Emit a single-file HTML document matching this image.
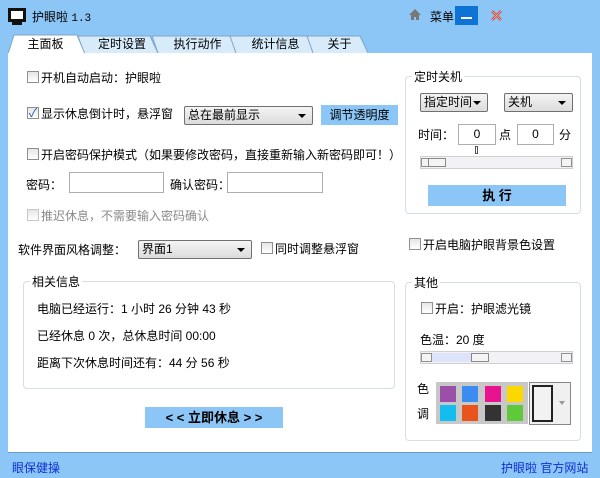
<!DOCTYPE html>
<html><head><meta charset="utf-8"><style>
*{margin:0;padding:0;box-sizing:border-box}
body{width:600px;height:478px;background:#8cc6f6;font:12px "Liberation Sans","Noto Sans CJK SC",sans-serif;color:#000;position:relative;overflow:hidden}
.a{position:absolute;white-space:nowrap}
.cb{position:absolute;width:12px;height:12px;border:1px solid #8f8f8f;background:linear-gradient(#e6e6e6,#fff)}
.in{position:absolute;height:21px;border:1px solid #abadb3;background:#fff;text-align:center;line-height:19px}
.sel{position:absolute;height:19px;border:1px solid #707070;border-radius:2px;background:linear-gradient(#f4f4f4,#dcdcdc);padding-left:3px;line-height:17px}
.sel:after{content:"";position:absolute;right:6px;top:7px;border:4px solid transparent;border-top:4px solid #000}
.btn{position:absolute;background:#8cc6f6;text-align:center}
.grp{position:absolute;border:1px solid #d5dfe5;border-radius:4px}
.gl{position:absolute;background:#fff;padding:0 2px;top:-9px;left:6px}
.tab{position:absolute;top:36px;height:17px;text-align:center;line-height:17px;color:#000}
.sb{position:absolute;height:13px;border:1px solid #d0d0d0;background:#f2f2f6}
.sb i{position:absolute;top:1px;width:11px;height:9px;border:1px solid #909090;background:#f4f4f4}
.sw{position:absolute;width:16px;height:16px}
</style></head><body>
<!-- title -->
<div class="a" style="left:8px;top:8px;width:18px;height:14px;background:#111;border:2px solid #111"><div style="margin:1px;height:8px;background:#fff"></div></div>
<div class="a" style="left:12px;top:22px;width:10px;height:3px;background:#111"></div>
<div class="a" style="left:32px;top:8px;font-size:12px">护眼啦 <span style="font-family:'Liberation Mono';font-size:11px">1.3</span></div>
<svg class="a" style="left:409px;top:9px" width="12" height="11"><path d="M6 0L0 6h2v5h3V8h2v3h3V6h2z" fill="#777"/></svg>
<div class="a" style="left:430px;top:8px;font-size:12px">菜单</div>
<div class="a" style="left:455px;top:6px;width:23px;height:19px;background:#0d73d4"><div style="position:absolute;left:6px;top:11px;width:11px;height:2px;background:#fff"></div></div>
<svg class="a" style="left:491px;top:10px" width="11" height="11"><path d="M1 1L10 10M10 1L1 10" stroke="#d43a2a" stroke-width="2.5"/><path d="M1 1L10 10M10 1L1 10" stroke="#f6c0b8" stroke-width="0.8"/></svg>
<!-- tabs -->
<svg class="a" style="left:8px;top:33px" width="360" height="21">
<path d="M76 20L70 3h72l8 17" fill="#d7ebfb" stroke="#7ea6c8"/>
<path d="M150 20L144 3h78l8 17" fill="#d7ebfb" stroke="#7ea6c8"/>
<path d="M228 20L222 3h77l8 17" fill="#d7ebfb" stroke="#7ea6c8"/>
<path d="M305 20L299 3h53l8 17" fill="#d7ebfb" stroke="#7ea6c8"/>
<path d="M0 21L6 2h63l8 19" fill="#fff" stroke="#7ea6c8"/>
</svg>
<div class="tab" style="left:18px;width:55px">主面板</div>
<div class="tab" style="left:87px;width:70px">定时设置</div>
<div class="tab" style="left:160px;width:75px">执行动作</div>
<div class="tab" style="left:238px;width:75px">统计信息</div>
<div class="tab" style="left:312px;width:55px">关于</div>
<!-- panel -->
<div class="a" style="left:8px;top:53px;width:584px;height:400px;background:#fff;border-bottom:1px solid #6a9cc8"></div>
<!-- left -->
<div class="cb" style="left:27px;top:71px"></div><div class="a" style="left:41px;top:69px">开机自动启动：护眼啦</div>
<div class="cb" style="left:27px;top:107px"></div><div class="a" style="left:27px;top:104px;color:#2a4fb0;font-size:12px;width:12px;text-align:center">✓</div><div class="a" style="left:41px;top:105px">显示休息倒计时，悬浮窗</div>
<div class="sel" style="left:184px;top:106px;width:129px">总在最前显示</div>
<div class="btn" style="left:321px;top:105px;width:77px;height:20px;line-height:20px">调节透明度</div>
<div class="cb" style="left:27px;top:148px"></div><div class="a" style="left:41px;top:146px">开启密码保护模式（如果要修改密码，直接重新输入新密码即可！）</div>
<div class="a" style="left:26px;top:176px">密码：</div>
<div class="in" style="left:69px;top:172px;width:95px"></div>
<div class="a" style="left:170px;top:176px">确认密码：</div>
<div class="in" style="left:227px;top:172px;width:96px"></div>
<div class="cb" style="left:27px;top:209px;border-color:#c8c8c8"></div><div class="a" style="left:41px;top:207px;color:#8a8a8a">推迟休息，不需要输入密码确认</div>
<div class="a" style="left:18px;top:241px">软件界面风格调整：</div>
<div class="sel" style="left:138px;top:240px;width:114px">界面1</div>
<div class="cb" style="left:261px;top:242px"></div><div class="a" style="left:275px;top:240px">同时调整悬浮窗</div>
<div class="grp" style="left:23px;top:281px;width:372px;height:108px"><div class="gl">相关信息</div></div>
<div class="a" style="left:37px;top:300px">电脑已经运行：1 小时 26 分钟 43 秒</div>
<div class="a" style="left:37px;top:327px">已经休息 0 次，总休息时间 00:00</div>
<div class="a" style="left:37px;top:354px">距离下次休息时间还有：44 分 56 秒</div>
<div class="btn" style="left:145px;top:407px;width:138px;height:21px;line-height:21px;font-weight:bold;font-size:13px">&lt; &lt; 立即休息 &gt; &gt;</div>
<!-- right -->
<div class="grp" style="left:405px;top:76px;width:176px;height:138px"><div class="gl">定时关机</div></div>
<div class="sel" style="left:420px;top:93px;width:68px">指定时间</div>
<div class="sel" style="left:504px;top:93px;width:69px">关机</div>
<div class="a" style="left:418px;top:126px">时间：</div>
<div class="in" style="left:458px;top:124px;width:38px">0</div>
<div class="a" style="left:499px;top:126px">点</div>
<div class="in" style="left:517px;top:124px;width:37px">0</div>
<div class="a" style="left:559px;top:126px">分</div>
<div class="a" style="left:475px;top:146px;width:3px;height:8px;border:1px solid #555"></div>
<div class="sb" style="left:420px;top:156px;width:153px"><i style="left:0"></i><i style="left:7px;width:18px;border-color:#888"></i><i style="right:0"></i></div>
<div class="btn" style="left:428px;top:185px;width:138px;height:21px;line-height:21px;font-weight:bold;font-size:13px">执 行</div>
<div class="cb" style="left:409px;top:238px"></div><div class="a" style="left:423px;top:236px">开启电脑护眼背景色设置</div>
<div class="grp" style="left:405px;top:282px;width:176px;height:159px"><div class="gl">其他</div></div>
<div class="cb" style="left:421px;top:302px"></div><div class="a" style="left:435px;top:300px">开启：护眼滤光镜</div>
<div class="a" style="left:420px;top:331px">色温：20 度</div>
<div class="sb" style="left:420px;top:351px;width:153px"><i style="left:0"></i><div style="position:absolute;left:11px;top:1px;width:40px;height:9px;background:#dde3fb"></div><i style="left:50px;width:18px;border-color:#888"></i><i style="right:0"></i></div>
<div class="a" style="left:417px;top:380px">色</div>
<div class="a" style="left:417px;top:405px">调</div>
<div class="a" style="left:436px;top:382px;width:92px;height:42px;background:#c8c8c8"></div>
<div class="sw" style="left:440px;top:386px;background:#9b4fa8"></div>
<div class="sw" style="left:462px;top:386px;background:#3a8cf0"></div>
<div class="sw" style="left:485px;top:386px;background:#e8148f"></div>
<div class="sw" style="left:507px;top:386px;background:#fdd800"></div>
<div class="sw" style="left:440px;top:405px;background:#13bdf0"></div>
<div class="sw" style="left:462px;top:405px;background:#e8541c"></div>
<div class="sw" style="left:485px;top:405px;background:#333"></div>
<div class="sw" style="left:507px;top:405px;background:#5fc93a"></div>
<div class="a" style="left:529px;top:382px;width:42px;height:43px;border:1px solid #888;background:#f0f0f0"></div>
<div class="a" style="left:532px;top:385px;width:21px;height:37px;border:2px solid #222;background:#f2f2f2"></div>
<div class="a" style="left:559px;top:401px;border:3px solid transparent;border-top:4px solid #999"></div>
<!-- footer -->
<div class="a" style="left:12px;top:459px;color:#0f2fd2">眼保健操</div>
<div class="a" style="left:501px;top:459px;color:#0f2fd2">护眼啦 官方网站</div>
</body></html>
